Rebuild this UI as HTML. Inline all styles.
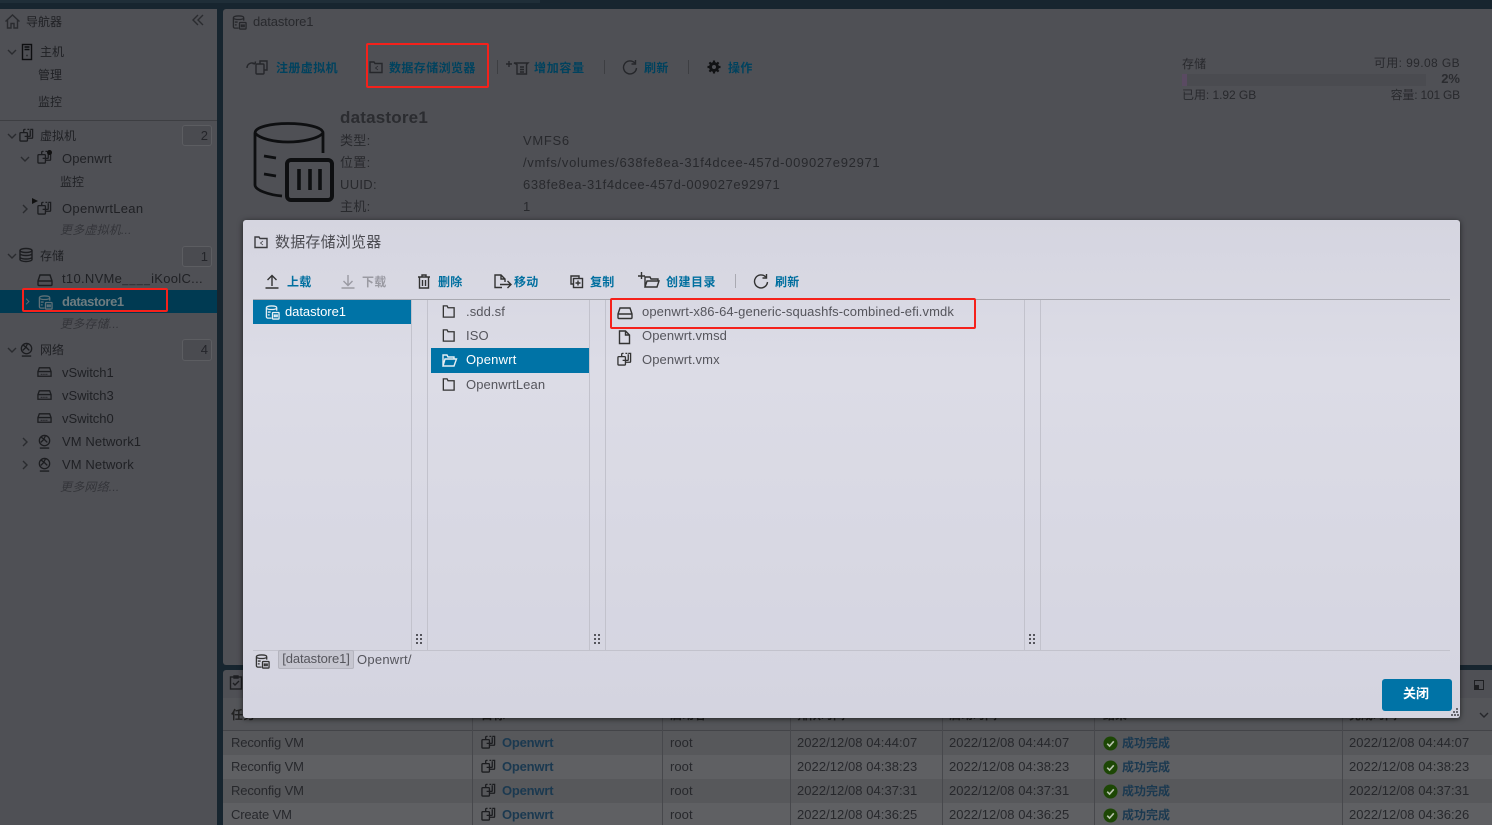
<!DOCTYPE html>
<html lang="zh"><head><meta charset="utf-8"><title>datastore1</title>
<style>
html,body{margin:0;padding:0;width:1492px;height:825px;overflow:hidden;background:#17252f}
body{position:relative;font-family:"Liberation Sans","Noto Sans CJK SC",sans-serif;font-size:13px;color:#303136}
.t{position:absolute;white-space:nowrap;line-height:18px;height:18px;letter-spacing:.1px}
.b{position:absolute}
svg{position:absolute;overflow:visible;fill:none;stroke:currentColor;stroke-width:1.4}
.c{font-size:12px;letter-spacing:0}
.l{color:#00425e;font-weight:bold;font-size:12px;letter-spacing:.4px}
.m{color:#006f9f;font-weight:bold;font-size:12px;letter-spacing:.2px}
.f{color:#55555c;letter-spacing:.1px}
.g{color:#28292d}
.w{letter-spacing:.7px}
.s{font-size:12px;letter-spacing:.1px}
.i{font-style:italic;color:#34353a;font-size:12px;letter-spacing:.2px}
.n{color:#1f2024}
.r{position:absolute;left:223px;width:1269px;height:24px}
.task{color:#27282c;letter-spacing:.05px}
.a{color:#1b3950;font-weight:bold;letter-spacing:-.2px}
.z{font-size:12px;letter-spacing:0}
.h{font-weight:bold;color:#222;font-size:12px;letter-spacing:0}
.redb{position:absolute;border:2px solid #f5211b;border-radius:2px;box-sizing:border-box}
.bd{position:absolute;width:30px;height:21px;left:182px;border:1px solid #5c5d61;border-radius:3px;background:#4a4b50;box-sizing:border-box;text-align:right;padding-right:3px;line-height:20px;color:#24252a;font-size:13px}
</style></head><body>
<svg width="0" height="0" style="position:absolute"><defs>
<symbol id="vm" viewBox="0 0 16 16"><rect x="1" y="6" width="8" height="9" rx="1"/><path d="M5 6V3.500a1 1 0 0 1 1-1h1M9 2.500h2M6 10h5a1 1 0 0 0 1-1V3.500M12 2.500h2.500v8.500a1 1 0 0 1-1 1H9"/></symbol>
<symbol id="ds" viewBox="0 0 16 16"><path d="M7 14H3a1.500 1.500 0 0 1-1.500-1.500V3C1.500 1.500 4 1 7 1s5.500.5 5.500 2v3"/><path d="M1.500 3.500c1 1 3 1.300 5.500 1.300s4.500-.3 5.500-1.300M3 7.500h3M3 10.500h2"/><rect x="8" y="8" width="7" height="7" rx=".6"/><path d="M10 10v3M11.500 10v3M13 10v3"/></symbol>
<symbol id="folder" viewBox="0 0 16 16"><path d="M2.500 14V2h4l1 2h6.500v10z"/></symbol>
<symbol id="disk" viewBox="0 0 16 16"><path d="M1 9l2-6h10l2 6v3.500a1 1 0 0 1-1 1H2a1 1 0 0 1-1-1zM1 9h14"/></symbol>
<symbol id="sw" viewBox="0 0 16 16"><path d="M1 7l1.500-4h11L15 7v5H1zM1 7h14"/><path d="M4 10h8" stroke-dasharray="1 1"/></symbol>
<symbol id="net" viewBox="0 0 16 16"><circle cx="8" cy="7" r="5.500"/><path d="M4 3l4 3 3 3M9 2l-2 4-3 3M3 15h10"/></symbol>
<symbol id="ck" viewBox="0 0 16 16"><circle cx="8" cy="8" r="7.500" fill="#1d4705" stroke="none"/><path d="M4.500 8.200l2.500 2.500 4.500-5" stroke="#b9c4ae" stroke-width="1.700"/></symbol>
<symbol id="ref" viewBox="0 0 16 16"><path d="M12.800 4A6.500 6.500 0 1 0 14.500 9"/><path d="M13.500 1v4h-4"/></symbol>
<symbol id="dn" viewBox="0 0 10 10"><path d="M1 3l4 4 4-4"/></symbol>
<symbol id="rt" viewBox="0 0 10 10"><path d="M3 1l4 4-4 4"/></symbol>
</defs></svg>

<div class="b" style="left:0;top:0;width:540px;height:3px;background:#1f2e38"></div>
<!-- sidebar -->
<div class="b" style="left:0;top:9px;width:217px;height:816px;background:#4f5055"></div>
<svg style="left:5px;top:14px;color:#2a2b2f" width="15" height="15" viewBox="0 0 15 15"><path d="M.5 7.500L7.500 1l7 6.500M2.500 6v8h3.500v-4.500h3V14h3.500V6"/></svg>
<div class="t n c" style="left:26px;top:13px">导航器</div>
<svg style="left:192px;top:14px;color:#2a2b2f" width="12" height="12" viewBox="0 0 12 12"><path d="M6 1L1 6l5 5M11 1L6 6l5 5"/></svg>
<svg style="left:7px;top:47px;color:#2a2b2f" width="10" height="10"><use href="#dn"/></svg>
<svg style="left:22px;top:44px;color:#0d0e10" width="10" height="16" viewBox="0 0 10 16"><rect x=".5" y=".5" width="9" height="15"/><path d="M2.500 3h5M2.500 5.500h5M4.500 11.500h1"/></svg>
<div class="t n c" style="left:40px;top:43px">主机</div>
<div class="t n c" style="left:38px;top:66px">管理</div>
<div class="t n c" style="left:38px;top:93px">监控</div>
<div class="b" style="left:0;top:120px;width:217px;height:1px;background:#3d3e42"></div>
<svg style="left:7px;top:131px;color:#2a2b2f" width="10" height="10"><use href="#dn"/></svg>
<svg style="left:19px;top:127px;color:#1c1d20" width="15" height="15"><use href="#vm"/></svg>
<div class="t n c" style="left:40px;top:127px">虚拟机</div>
<div class="bd" style="top:125px">2</div>
<svg style="left:20px;top:154px;color:#2a2b2f" width="10" height="10"><use href="#dn"/></svg>
<svg style="left:37px;top:149px;color:#1c1d20" width="15" height="15"><use href="#vm"/></svg>
<div class="b" style="left:47px;top:150px;width:5px;height:5px;border-radius:50%;background:#111"></div>
<div class="t n" style="left:62px;top:150px">Openwrt</div>
<div class="t n c" style="left:60px;top:173px">监控</div>
<div class="b" style="left:32px;top:198px;width:0;height:0;border-left:6px solid #111;border-top:3px solid transparent;border-bottom:3px solid transparent"></div>
<svg style="left:20px;top:204px;color:#2a2b2f" width="10" height="10"><use href="#rt"/></svg>
<svg style="left:37px;top:200px;color:#1c1d20" width="15" height="15"><use href="#vm"/></svg>
<div class="t n" style="left:62px;top:200px;letter-spacing:.3px">OpenwrtLean</div>
<div class="t i" style="left:60px;top:221px">更多虚拟机...</div>

<svg style="left:7px;top:251px;color:#2a2b2f" width="10" height="10"><use href="#dn"/></svg>
<svg style="left:19px;top:248px;color:#1c1d20" width="14" height="14" viewBox="0 0 14 14"><ellipse cx="7" cy="2.500" rx="6" ry="2"/><path d="M1 2.500v9c0 1 2.500 2 6 2s6-1 6-2v-9M1 6c1 1 3 1.500 6 1.500S12 7 13 6M1 9.500c1 1 3 1.500 6 1.500s5-.5 6-1.500"/></svg>
<div class="t n c" style="left:40px;top:247px">存储</div>
<div class="bd" style="top:246px">1</div>
<svg style="left:37px;top:272px;color:#1c1d20" width="16" height="16"><use href="#disk"/></svg>
<div class="t n" style="left:62px;top:270px;letter-spacing:.3px">t10.NVMe<span style="font-size:11px;letter-spacing:1.1px">____</span>iKoolC...</div>
<div class="b" style="left:0;top:290px;width:217px;height:23px;background:#003a52"></div>
<svg style="left:24px;top:298px;color:#5c6a70" width="7" height="7"><use href="#rt"/></svg>
<svg style="left:38px;top:295px;color:#5f7077" width="15" height="15"><use href="#ds"/></svg>
<div class="t" style="left:62px;top:293px;color:#6e7c80;font-weight:bold;letter-spacing:-.4px">datastore1</div>
<div class="redb" style="left:22px;top:288px;width:146px;height:24px;border-width:2.500px"></div>
<div class="t i" style="left:60px;top:315px">更多存储...</div>

<svg style="left:7px;top:345px;color:#2a2b2f" width="10" height="10"><use href="#dn"/></svg>
<svg style="left:19px;top:342px;color:#1c1d20" width="15" height="15"><use href="#net"/></svg>
<div class="t n c" style="left:40px;top:341px">网络</div>
<div class="bd" style="top:339px;height:22px">4</div>
<svg style="left:37px;top:365px;color:#1c1d20" width="15" height="15"><use href="#sw"/></svg>
<div class="t n" style="left:62px;top:364px;letter-spacing:-.05px">vSwitch1</div>
<svg style="left:37px;top:388px;color:#1c1d20" width="15" height="15"><use href="#sw"/></svg>
<div class="t n" style="left:62px;top:387px;letter-spacing:-.05px">vSwitch3</div>
<svg style="left:37px;top:411px;color:#1c1d20" width="15" height="15"><use href="#sw"/></svg>
<div class="t n" style="left:62px;top:410px;letter-spacing:-.05px">vSwitch0</div>
<svg style="left:20px;top:437px;color:#2a2b2f" width="10" height="10"><use href="#rt"/></svg>
<svg style="left:37px;top:434px;color:#1c1d20" width="15" height="15"><use href="#net"/></svg>
<div class="t n" style="left:62px;top:433px">VM Network1</div>
<svg style="left:20px;top:460px;color:#2a2b2f" width="10" height="10"><use href="#rt"/></svg>
<svg style="left:37px;top:457px;color:#1c1d20" width="15" height="15"><use href="#net"/></svg>
<div class="t n" style="left:62px;top:456px">VM Network</div>
<div class="t i" style="left:60px;top:478px">更多网络...</div>

<!-- main panel -->
<div class="b" style="left:223px;top:9px;width:1269px;height:656px;background:#4f5055;border-radius:3px 0 0 3px"></div>
<svg style="left:232px;top:15px;color:#26272b" width="15" height="15"><use href="#ds"/></svg>
<div class="t g" style="left:253px;top:13px;letter-spacing:-.1px">datastore1</div>

<svg style="left:246px;top:58px;color:#26272b" width="22" height="18" viewBox="0 0 22 18"><path d="M1 10a5 5 0 0 1 8-4M9 6L6.500 5.500M9 6l.5-2.500"/><rect x="10" y="6" width="8" height="10" rx="1"/><path d="M14 6V3h7v9h-3"/></svg>
<div class="t l" style="left:276px;top:59px">注册虚拟机</div>
<svg style="left:369px;top:60px;color:#26272b" width="14" height="14" viewBox="0 0 14 14"><path d="M1 12.500V2h4l1 1.500h7v9z"/><path d="M9 6L6.500 8 9 10" stroke-width=".8"/></svg>
<div class="t l" style="left:389px;top:59px">数据存储浏览器</div>
<div class="redb" style="left:366px;top:43px;width:123px;height:45px"></div>
<div class="b" style="left:497px;top:60px;width:1px;height:14px;background:#3d3e42"></div>
<svg style="left:505px;top:60px;color:#26272b" width="25" height="15" viewBox="0 0 25 15"><path d="M1 4h6M4 1v6M9 3h14l-1.500 1.500V14H12V4.500zM15 7h4M15 9.500h4M15 12h4"/></svg>
<div class="t l" style="left:534px;top:59px;letter-spacing:.7px">增加容量</div>
<div class="b" style="left:604px;top:60px;width:1px;height:14px;background:#3d3e42"></div>
<svg style="left:622px;top:59px;color:#26272b" width="16" height="16"><use href="#ref"/></svg>
<div class="t l" style="left:644px;top:59px">刷新</div>
<div class="b" style="left:688px;top:60px;width:1px;height:14px;background:#3d3e42"></div>
<svg style="left:707px;top:60px;color:#111214" width="14" height="14" viewBox="0 0 14 14"><circle cx="7" cy="7" r="3.500" stroke-width="3"/><path d="M7 .5v2.500M7 11v2.500M.5 7H3M11 7h2.500M2.400 2.400l1.700 1.700M9.900 9.900l1.700 1.700M2.400 11.600l1.700-1.700M9.900 4.100l1.700-1.700" stroke-width="2.200"/></svg>
<div class="t l" style="left:728px;top:59px">操作</div>

<div class="t g s" style="left:1182px;top:55px">存储</div>
<div class="t g s" style="right:32px;top:54px;letter-spacing:.4px">可用: 99.08 GB</div>
<div class="b" style="left:1182px;top:74px;width:244px;height:12px;background:#4a4b50"></div>
<div class="b" style="left:1182px;top:74px;width:5px;height:12px;background:#5a4a62"></div>
<div class="t" style="right:32px;top:70px;font-weight:bold;color:#2b2c30;letter-spacing:0">2%</div>
<div class="t g s" style="left:1182px;top:86px;letter-spacing:-.05px">已用: 1.92 GB</div>
<div class="t g s" style="right:32px;top:86px;letter-spacing:-.2px">容量: 101 GB</div>

<svg style="left:253px;top:122px;color:#0e0f11;stroke-width:2.800" width="81" height="80" viewBox="0 0 81 80"><path d="M70 31V11C70 5 52 1.500 35 1.500S2 5 2 11v52c0 5 14 10 27 11"/><path d="M2 11c5 6 20 9 33 9s30-3 35-9"/><path d="M11 34l12 2M11 52l12 2"/><rect x="34" y="38" width="45" height="40" rx="4" stroke-width="4"/><path d="M46 47v21M57 47v21M67 47v21" stroke-width="3.600"/></svg>
<div class="t" style="left:340px;top:109px;font-size:17px;font-weight:bold;color:#2b2c30;letter-spacing:.2px">datastore1</div>
<div class="t g" style="left:340px;top:132px;letter-spacing:.3px">类型:</div><div class="t g w" style="left:523px;top:132px">VMFS6</div>
<div class="t g" style="left:340px;top:154px;letter-spacing:.3px">位置:</div><div class="t g w" style="left:523px;top:154px">/vmfs/volumes/638fe8ea-31f4dcee-457d-009027e92971</div>
<div class="t g" style="left:340px;top:176px;letter-spacing:.3px">UUID:</div><div class="t g w" style="left:523px;top:176px;letter-spacing:.6px">638fe8ea-31f4dcee-457d-009027e92971</div>
<div class="t g" style="left:340px;top:198px;letter-spacing:.3px">主机:</div><div class="t g" style="left:523px;top:198px">1</div>

<!-- tasks -->
<div class="b" style="left:223px;top:670px;width:1269px;height:155px;background:#4f5055;border-radius:3px 0 0 0"></div>
<div class="b" style="left:223px;top:698px;width:1269px;height:33px;background:#545559;border-bottom:1px solid #434448;box-sizing:border-box"></div>
<svg style="left:230px;top:675px;color:#1e1f22" width="12" height="15" viewBox="0 0 12 15"><rect x=".5" y="2" width="11" height="12"/><path d="M4 1h4v2H4zM3 8l2 2 4-4"/></svg>
<div class="t h" style="left:231px;top:706px">任务</div>
<div class="t h" style="left:481px;top:706px">目标</div>
<div class="t h" style="left:670px;top:706px">启动者</div>
<div class="t h" style="left:797px;top:706px">排队时间</div>
<div class="t h" style="left:949px;top:706px">启动时间</div>
<div class="t h" style="left:1103px;top:706px">结果</div>
<div class="t h" style="left:1349px;top:706px">完成时间</div>
<div class="b" style="left:1474px;top:680px;width:10px;height:10px;border:1px solid #1e1f22;box-sizing:border-box"></div>
<div class="b" style="left:1474px;top:685px;width:5px;height:5px;background:#1e1f22"></div>
<svg style="left:1479px;top:710px;color:#26272b" width="10" height="10"><use href="#dn"/></svg>
<div class="r" style="top:731px;background:#57585b"></div>
<div class="r" style="top:755px;background:#5f6063"></div>
<div class="r" style="top:779px;background:#57585b"></div>
<div class="r" style="top:803px;background:#5f6063;height:22px"></div>
<div class="b" style="left:472px;top:698px;width:1px;height:127px;background:#47484c"></div>
<div class="b" style="left:662px;top:698px;width:1px;height:127px;background:#47484c"></div>
<div class="b" style="left:790px;top:698px;width:1px;height:127px;background:#47484c"></div>
<div class="b" style="left:942px;top:698px;width:1px;height:127px;background:#47484c"></div>
<div class="b" style="left:1094px;top:698px;width:1px;height:127px;background:#47484c"></div>
<div class="b" style="left:1342px;top:698px;width:1px;height:127px;background:#47484c"></div>

<div class="t task" style="left:231px;top:734px;letter-spacing:-.15px">Reconfig VM</div><svg style="left:481px;top:734px;color:#1c1d20" width="15" height="15"><use href="#vm"/></svg><div class="t a" style="left:502px;top:734px">Openwrt</div><div class="t task" style="left:670px;top:734px">root</div><div class="t task" style="left:797px;top:734px">2022/12/08 04:44:07</div><div class="t task" style="left:949px;top:734px">2022/12/08 04:44:07</div><svg style="left:1103px;top:736px" width="15" height="15"><use href="#ck"/></svg><div class="t a z" style="left:1122px;top:734px">成功完成</div><div class="t task" style="left:1349px;top:734px">2022/12/08 04:44:07</div>
<div class="t task" style="left:231px;top:758px;letter-spacing:-.15px">Reconfig VM</div><svg style="left:481px;top:758px;color:#1c1d20" width="15" height="15"><use href="#vm"/></svg><div class="t a" style="left:502px;top:758px">Openwrt</div><div class="t task" style="left:670px;top:758px">root</div><div class="t task" style="left:797px;top:758px">2022/12/08 04:38:23</div><div class="t task" style="left:949px;top:758px">2022/12/08 04:38:23</div><svg style="left:1103px;top:760px" width="15" height="15"><use href="#ck"/></svg><div class="t a z" style="left:1122px;top:758px">成功完成</div><div class="t task" style="left:1349px;top:758px">2022/12/08 04:38:23</div>
<div class="t task" style="left:231px;top:782px;letter-spacing:-.15px">Reconfig VM</div><svg style="left:481px;top:782px;color:#1c1d20" width="15" height="15"><use href="#vm"/></svg><div class="t a" style="left:502px;top:782px">Openwrt</div><div class="t task" style="left:670px;top:782px">root</div><div class="t task" style="left:797px;top:782px">2022/12/08 04:37:31</div><div class="t task" style="left:949px;top:782px">2022/12/08 04:37:31</div><svg style="left:1103px;top:784px" width="15" height="15"><use href="#ck"/></svg><div class="t a z" style="left:1122px;top:782px">成功完成</div><div class="t task" style="left:1349px;top:782px">2022/12/08 04:37:31</div>
<div class="t task" style="left:231px;top:806px;letter-spacing:-.15px">Create VM</div><svg style="left:481px;top:806px;color:#1c1d20" width="15" height="15"><use href="#vm"/></svg><div class="t a" style="left:502px;top:806px">Openwrt</div><div class="t task" style="left:670px;top:806px">root</div><div class="t task" style="left:797px;top:806px">2022/12/08 04:36:25</div><div class="t task" style="left:949px;top:806px">2022/12/08 04:36:25</div><svg style="left:1103px;top:808px" width="15" height="15"><use href="#ck"/></svg><div class="t a z" style="left:1122px;top:806px">成功完成</div><div class="t task" style="left:1349px;top:806px">2022/12/08 04:36:26</div>

<!-- dialog -->
<div class="b" style="left:243px;top:220px;width:1217px;height:498px;background:linear-gradient(#d5d5e0,#dcdce6 30%,#d4d4e0);border-radius:3px;box-shadow:0 1px 6px rgba(0,0,0,.6)"></div>
<svg style="left:254px;top:235px;color:#3c3c40" width="14" height="14" viewBox="0 0 14 14"><path d="M1 12.500V2h4l1 1.500h7v9z"/><path d="M9 6L6.500 8 9 10" stroke-width=".8"/></svg>
<div class="t" style="left:275px;top:234px;font-size:15px;color:#4c4c52;letter-spacing:.2px">数据存储浏览器</div>

<svg style="left:265px;top:274px;color:#333" width="14" height="15" viewBox="0 0 14 15"><path d="M7 12V1.500M2.500 6L7 1.500 11.500 6M.5 14h13"/></svg>
<div class="t m" style="left:287px;top:273px">上载</div>
<svg style="left:341px;top:274px;color:#9a9aa2" width="14" height="15" viewBox="0 0 14 15"><path d="M7 1v10.500M2.500 7L7 11.500 11.500 7M.5 14h13"/></svg>
<div class="t m" style="left:362px;top:273px;color:#9a9aa2">下载</div>
<svg style="left:417px;top:274px;color:#333" width="14" height="15" viewBox="0 0 14 15"><path d="M1 3h12M5 3V1h4v2M2.500 3v11h9V3M5.500 6v6M8.500 6v6"/></svg>
<div class="t m" style="left:438px;top:273px">删除</div>
<svg style="left:494px;top:274px;color:#333" width="18" height="15" viewBox="0 0 18 15"><path d="M8 13.500H1V1h6l4 4v3M7 1v4h4M6 10.500h11M13.500 7l3.500 3.500-3.500 3.500"/></svg>
<div class="t m" style="left:514px;top:273px">移动</div>
<svg style="left:570px;top:275px;color:#333" width="13" height="13" viewBox="0 0 13 13"><path d="M3 9H1V1h8v2"/><rect x="3.500" y="3.500" width="9" height="9"/><path d="M8 5.500v5M5.500 8h5"/></svg>
<div class="t m" style="left:590px;top:273px">复制</div>
<svg style="left:638px;top:272px;color:#333" width="22" height="17" viewBox="0 0 22 17"><path d="M0 4h7M3.500 0v7M7 15V5h5l1 2h7v2M7 15h12l2-6H9z"/></svg>
<div class="t m" style="left:666px;top:273px;letter-spacing:.5px">创建目录</div>
<div class="b" style="left:735px;top:274px;width:1px;height:14px;background:#aaaab2"></div>
<svg style="left:753px;top:273px;color:#333" width="16" height="16"><use href="#ref"/></svg>
<div class="t m" style="left:775px;top:273px">刷新</div>

<div class="b" style="left:253px;top:299px;width:1197px;height:1px;background:#a9a9b1"></div>
<div class="b" style="left:253px;top:650px;width:1197px;height:1px;background:#c2c2cc"></div>
<div class="b" style="left:411px;top:300px;width:1px;height:350px;background:#c2c2cc"></div>
<div class="b" style="left:427px;top:300px;width:1px;height:350px;background:#c2c2cc"></div>
<div class="b" style="left:589px;top:300px;width:1px;height:350px;background:#c2c2cc"></div>
<div class="b" style="left:605px;top:300px;width:1px;height:350px;background:#c2c2cc"></div>
<div class="b" style="left:1024px;top:300px;width:1px;height:350px;background:#c2c2cc"></div>
<div class="b" style="left:1040px;top:300px;width:1px;height:350px;background:#c2c2cc"></div>
<svg style="left:416px;top:634px;stroke:none;fill:#55555c" width="6" height="11" viewBox="0 0 6 11"><path d="M0 0h2v2H0zM4 0h2v2H4zM0 4h2v2H0zM4 4h2v2H4zM0 8h2v2H0zM4 8h2v2H4z"/></svg>
<svg style="left:594px;top:634px;stroke:none;fill:#55555c" width="6" height="11" viewBox="0 0 6 11"><path d="M0 0h2v2H0zM4 0h2v2H4zM0 4h2v2H0zM4 4h2v2H4zM0 8h2v2H0zM4 8h2v2H4z"/></svg>
<svg style="left:1029px;top:634px;stroke:none;fill:#55555c" width="6" height="11" viewBox="0 0 6 11"><path d="M0 0h2v2H0zM4 0h2v2H4zM0 4h2v2H0zM4 4h2v2H4zM0 8h2v2H0zM4 8h2v2H4z"/></svg>

<div class="b" style="left:253px;top:300px;width:158px;height:24px;background:#0073a6"></div>
<svg style="left:265px;top:305px;color:#e6eef3" width="15" height="15"><use href="#ds"/></svg>
<div class="t" style="left:285px;top:303px;color:#fff;letter-spacing:-.05px">datastore1</div>

<svg style="left:441px;top:304px;color:#333" width="15" height="15"><use href="#folder"/></svg>
<div class="t f" style="left:466px;top:303px">.sdd.sf</div>
<svg style="left:441px;top:328px;color:#333" width="15" height="15"><use href="#folder"/></svg>
<div class="t f" style="left:466px;top:327px">ISO</div>
<div class="b" style="left:431px;top:348px;width:158px;height:25px;background:#0073a6"></div>
<svg style="left:442px;top:353px;color:#e6eef3" width="15" height="14" viewBox="0 0 15 14"><path d="M1 13V2h4l1 2h6v2M1 13h11l2.500-7H3z"/></svg>
<div class="t" style="left:466px;top:351px;color:#fff;letter-spacing:.2px">Openwrt</div>
<svg style="left:441px;top:377px;color:#333" width="15" height="15"><use href="#folder"/></svg>
<div class="t f" style="left:466px;top:376px">OpenwrtLean</div>

<svg style="left:617px;top:305px;color:#333" width="16" height="16"><use href="#disk"/></svg>
<div class="t f" style="left:642px;top:303px">openwrt-x86-64-generic-squashfs-combined-efi.vmdk</div>
<div class="redb" style="left:610px;top:298px;width:366px;height:31px;border-width:2.500px"></div>
<svg style="left:618px;top:330px;color:#333" width="13" height="14" viewBox="0 0 13 14"><path d="M1.500 1h6l4 4v8.500h-10zM7.500 1v4h4"/></svg>
<div class="t f" style="left:642px;top:327px">Openwrt.vmsd</div>
<svg style="left:617px;top:351px;color:#333" width="15" height="15"><use href="#vm"/></svg>
<div class="t f" style="left:642px;top:351px">Openwrt.vmx</div>

<svg style="left:255px;top:654px;color:#333" width="15" height="15"><use href="#ds"/></svg>
<div class="t" style="left:278px;top:650px;width:76px;height:19px;background:#c6c6d0;border:1px solid #b4b4be;border-radius:2px;box-sizing:border-box;text-align:center;line-height:16px;color:#55555c;letter-spacing:-.1px">[datastore1]</div>
<div class="t f" style="left:357px;top:651px;letter-spacing:.25px">Openwrt/</div>

<div class="b" style="left:1382px;top:679px;width:70px;height:32px;background:#0073a6;border-radius:3px"></div>
<div class="t" style="left:1403px;top:685px;color:#fff;font-weight:bold;letter-spacing:0">关闭</div>
<svg style="left:1451px;top:708px;stroke:none;fill:#66666d" width="8" height="8" viewBox="0 0 8 8"><path d="M5 0h2v2H5zM2 3h2v2H2zM5 3h2v2H5zM0 6h2v2H0zM3 6h2v2H3zM6 6h2v2H6z"/></svg>
</body></html>
